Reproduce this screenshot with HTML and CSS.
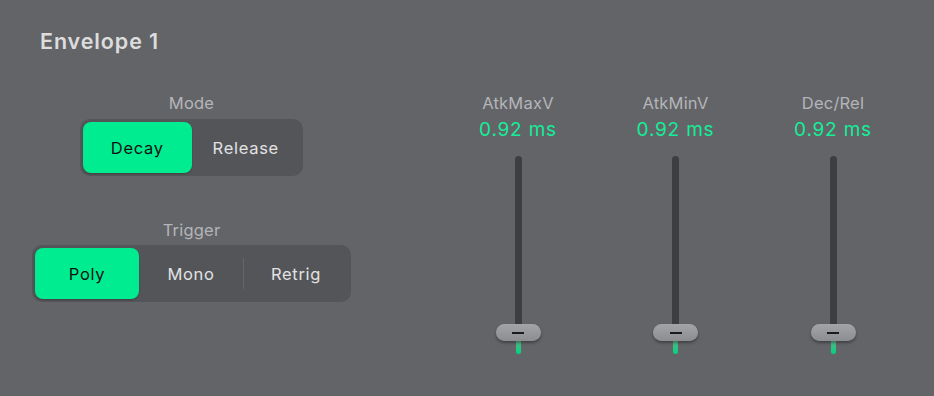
FILE: index.html
```html
<!DOCTYPE html>
<html>
<head>
    <title>Envelope 1</title>
    <link rel="stylesheet" href="styles.css">
</head>
<body>
<div class="panel">
    <h1>Envelope 1</h1>
    <div class="main">
        <div class="left">
            <div class="group">
                <div class="label">Mode</div>
                <div class="seg seg-mode">
                    <a href="#" class="seg-btn active">Decay</a>
                    <a href="#" class="seg-btn">Release</a>
                </div>
            </div>
            <div class="group trigger">
                <div class="label">Trigger</div>
                <div class="seg seg-trigger">
                    <a href="#" class="seg-btn active">Poly</a>
                    <a href="#" class="seg-btn">Mono</a>
                    <a href="#" class="seg-btn divided">Retrig</a>
                </div>
            </div>
        </div>
        <div class="sliders">
            <div class="slider">
                <div class="label">AtkMaxV</div>
                <div class="value">0.92 ms</div>
                <div class="track"></div>
                <div class="thumb"><span></span></div>
                <div class="fill"></div>
            </div>
            <div class="slider">
                <div class="label">AtkMinV</div>
                <div class="value">0.92 ms</div>
                <div class="track"></div>
                <div class="thumb"><span></span></div>
                <div class="fill"></div>
            </div>
            <div class="slider">
                <div class="label">Dec/Rel</div>
                <div class="value">0.92 ms</div>
                <div class="track"></div>
                <div class="thumb"><span></span></div>
                <div class="fill"></div>
            </div>
        </div>
    </div>
</div>
</body>
</html>
```

FILE: styles.css
```css
body {
    margin: 0;
    background-color: #636468;
    font-family: Inter, "Open Sans", sans-serif;
}

.panel {
    height: 396px;
    padding-top: 29px;
    box-sizing: border-box;
}

h1 {
    margin: 0 0 0 40px;
    font-size: 21.5px;
    line-height: 24px;
    font-weight: 600;
    letter-spacing: 0.9px;
    color: #dcdcdd;
}

.main {
    display: flex;
    margin-top: 41px;
    padding-left: 32px;
}

.left {
    width: 319px;
    display: flex;
    flex-direction: column;
    align-items: center;
}

.group {
    display: flex;
    flex-direction: column;
    align-items: center;
}

.group.trigger {
    margin-top: 45px;
}

.label {
    font-size: 16.5px;
    line-height: 18px;
    letter-spacing: 0.2px;
    color: #b4b5b8;
}

/* segmented controls */
.seg {
    display: flex;
    margin-top: 7px;
    padding: 3px;
    height: 57px;
    box-sizing: border-box;
    background-color: #545558;
    border-radius: 10px;
}

.seg-mode {
    width: 223px;
}

.seg-trigger {
    width: 319px;
    margin-top: 6px;
}

.seg-btn {
    flex: 1;
    display: flex;
    align-items: center;
    justify-content: center;
    font-size: 16.5px;
    letter-spacing: 0.7px;
    color: #e2e2e3;
    text-decoration: none;
    border-radius: 8px;
}

.seg-btn.active {
    background-color: #00ec90;
    color: #111;
    box-shadow: 0 1px 2px rgba(0, 0, 0, 0.25);
}

.seg-btn.divided {
    border-left: 1px solid #65666a;
    border-radius: 0 8px 8px 0;
    margin: 10px 0;
}

/* sliders */
.sliders {
    display: grid;
    grid-template-columns: repeat(3, 110px);
    column-gap: 47.5px;
    margin-left: 112px;
}

.slider {
    display: flex;
    flex-direction: column;
    align-items: center;
}

.value {
    margin-top: 7px;
    font-size: 19px;
    line-height: 22px;
    letter-spacing: 0.8px;
    color: #14ee98;
}

.track {
    margin-top: 15px;
    width: 7px;
    height: 176px;
    background-color: #3d3e41;
    border-radius: 4px 4px 0 0;
}

.thumb {
    margin-top: -8px;
    width: 45px;
    height: 17px;
    border-radius: 9px;
    background: linear-gradient(#a3a4a8, #8c8d91);
    box-shadow: 0 2px 3px rgba(0, 0, 0, 0.35);
    display: flex;
    align-items: center;
    justify-content: center;
    position: relative;
    z-index: 1;
}

.thumb span {
    width: 12px;
    height: 2px;
    background-color: #1a1a1a;
}

.fill {
    margin-top: -1px;
    width: 5px;
    height: 14px;
    background: linear-gradient(#5fae8a, #00d67f);
    border-radius: 0 0 3px 3px;
}
```
